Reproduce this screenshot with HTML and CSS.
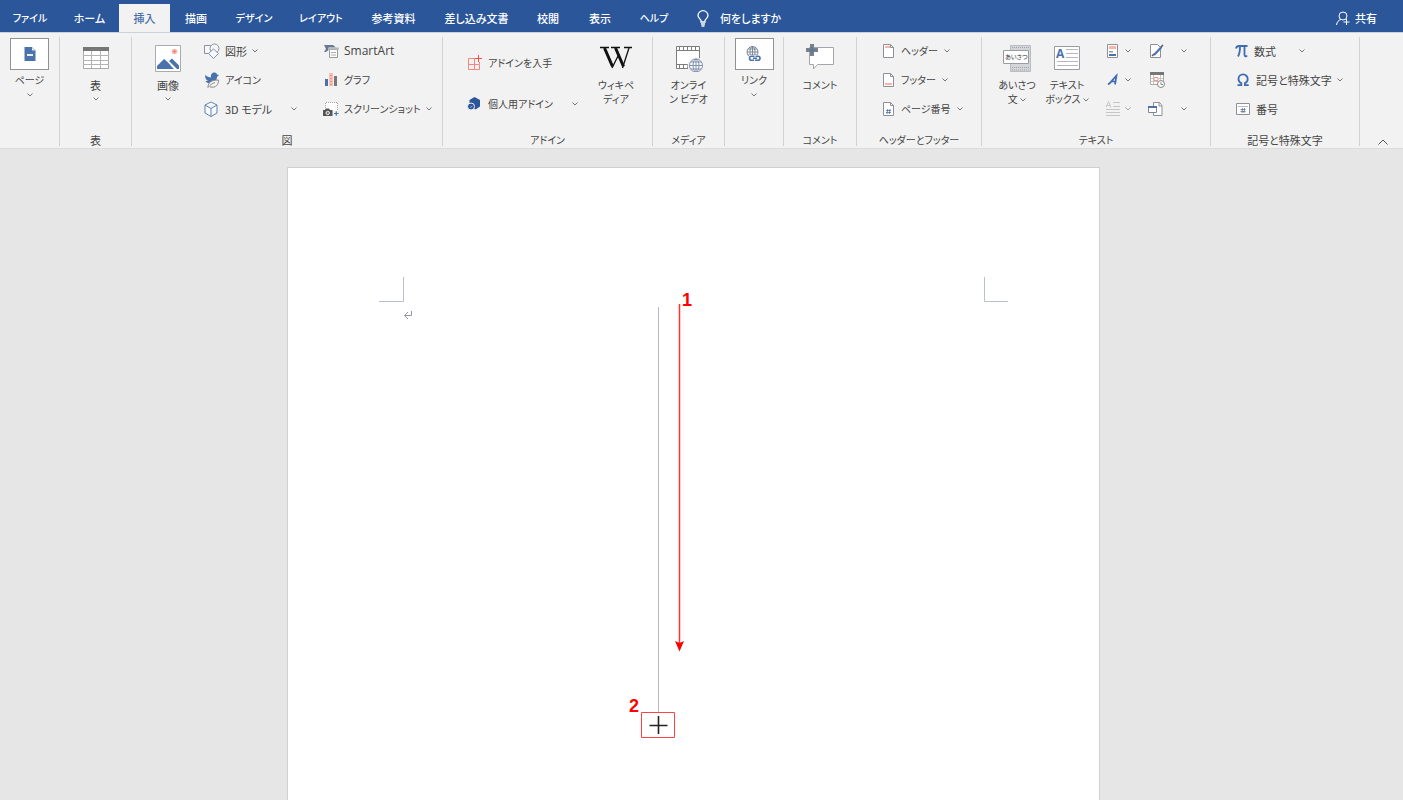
FILE: index.html
```html
<!DOCTYPE html>
<html lang="ja">
<head>
<meta charset="utf-8">
<title>文書</title>
<link rel="stylesheet" href="styles.css">
</head>
<body>
<svg class="defs" aria-hidden="true">
  <symbol id="caret" viewBox="0 0 6 6"><path d="M.5 1.500l2.500 2.500 2.500-2.500" fill="none" stroke="#777" stroke-width="1"/></symbol>
</svg>
<header class="titlebar">
  <nav class="tabs">
    <button class="tab kana">ファイル</button>
    <button class="tab">ホーム</button>
    <button class="tab active">挿入</button>
    <button class="tab">描画</button>
    <button class="tab kana">デザイン</button>
    <button class="tab kana">レイアウト</button>
    <button class="tab">参考資料</button>
    <button class="tab">差し込み文書</button>
    <button class="tab">校閲</button>
    <button class="tab">表示</button>
    <button class="tab kana">ヘルプ</button>
  </nav>
  <button class="tell">
    <svg width="12" height="17" viewBox="0 0 12 17" fill="none" stroke="#fff" stroke-width="1.3"><path d="M4 12V10.500C3.500 9 1 8 1 5.500a5 4.800 0 0 1 10 0C11 8 8.500 9 8 10.500V12zM4 14h4M4.500 16h3"/></svg>
    何をしますか
  </button>
  <button class="share">
    <svg width="14" height="15" viewBox="0 0 14 15" fill="none" stroke="#fff" stroke-width="1"><circle cx="7" cy="5" r="4"/><path d="M.5 14C1 11 2.500 9 5 8.500M10.500 8v6M7.500 11h6"/></svg>
    共有
  </button>
</header>

<div class="ribbon">
  <section class="group">
    <div class="body centered">
      <button class="boxed">
        <span class="frame"><svg width="12" height="16" viewBox="0 0 12 16"><path d="M.5 1H8l3.500 3.500V15H.5z" fill="#4a72ad"/><path d="M8 1v3.500h3.500" fill="#dce5f2"/><path d="M3 8h6v2H3z" fill="#e8eef7"/></svg></span>
        <span class="kana">ページ</span>
        <svg class="caret"><use href="#caret"/></svg>
      </button>
    </div>
  </section>

  <section class="group">
    <div class="body centered">
      <button class="big">
        <svg width="28" height="28" viewBox="0 0 28 28"><path d="M1.500 3.500h25v21h-25z" fill="#fff" stroke="#aaa"/><path d="M1 3h26v4H1z" fill="#777"/><path d="M1 11.500h26M1 16.500h26M1 20.500h26M9.500 7v17M18.500 7v17" stroke="#b4b4b4" fill="none"/></svg>
        <span>表</span>
        <svg class="caret"><use href="#caret"/></svg>
      </button>
    </div>
    <h2>表</h2>
  </section>

  <section class="group">
    <div class="body figures">
      <button class="big">
        <svg width="28" height="28" viewBox="0 0 28 28"><path d="M1.500 1.500h25v26h-25z" fill="#fff" stroke="#a9abb0"/><path d="M3 25v-3l7-7 3 2.500 3 3 1 1.500 3 3zM15 17l3-2.500 7 7V25h-2z" fill="#4a72ad"/><circle cx="20.500" cy="7.500" r="2.800" fill="#f7b6ae"/><circle cx="20.500" cy="7.500" r="1" fill="#e8645a"/></svg>
        <span>画像</span>
        <svg class="caret"><use href="#caret"/></svg>
      </button>
      <div class="stack">
        <button class="item"><svg width="16" height="16" viewBox="0 0 16 16" fill="#f8f8f8" stroke="#8b929d"><path d="M.5 2.500h9v8h-9z"/><circle cx="10.500" cy="5.500" r="4.500"/><path d="M9.500 6l5 4.500-5 5-5-5z" stroke="#7d93b5"/></svg><span>図形</span><svg class="caret"><use href="#caret"/></svg></button>
        <button class="item"><svg width="16" height="16" viewBox="0 0 16 16"><path d="M1 3c2 1.500 4 2.500 6 2.500C6.500 2.500 8 .5 10.500.5c1.500 0 2.500 1 2.500 2l2 .5-2 2c0 3-2.500 6-6 6.500C4 11.500 2 10.500 1.500 9H4C2 8 1 6 1 3z" fill="#4a72ad"/><path d="M4 15.500c0-5 3-7.500 10.500-7.500 0 5-2.500 8-8.500 7M4 15.500c2-2.500 4-4 7-5" fill="#f4f4f4" stroke="#8a8a8a"/></svg><span class="kana">アイコン</span></button>
        <button class="item"><svg width="16" height="16" viewBox="0 0 16 16" fill="#f8fafd" stroke="#5f82b5"><path d="M7 1l6 3v8l-6 3.500L1 12V4zM1 4l6 3.500L13 4M7 7.500v8"/></svg><span>3D モデル</span><svg class="caret far"><use href="#caret"/></svg></button>
      </div>
      <div class="stack">
        <button class="item"><svg width="16" height="16" viewBox="0 0 16 16"><path d="M1 2h9l3 2.500H5.500V7L3 9H1l2-3z" fill="#677892"/><path d="M6.500 6.500h8v8h-8z" fill="#fff" stroke="#999"/><path d="M6 4.500h10v2H6z" fill="#bbb"/><path d="M8 9.500h5M8 12h5" stroke="#aaa"/></svg><span class="latin">SmartArt</span></button>
        <button class="item"><svg width="16" height="16" viewBox="0 0 16 16"><path d="M2 7h3v7H2z" fill="#4a72ad"/><path d="M6 1h4v13H6z" fill="#f9beb6"/><path d="M8 3v10" stroke="#e9635a" stroke-dasharray="1 2"/><path d="M11 4h3v10h-3z" fill="#777"/></svg><span class="kana">グラフ</span></button>
        <button class="item"><svg width="16" height="16" viewBox="0 0 16 16"><path d="M2.500 9V1.500h12V10" fill="#fff" stroke="#a5a5a5" stroke-dasharray="1 1"/><path d="M0 9h2l1-1.500h3L7 9h2.500v6H0z" fill="#555"/><circle cx="4.700" cy="12" r="1.700" fill="#777" stroke="#eee"/><path d="M11 12.500h4.500M13.250 10.250v4.500" stroke="#4a72ad" stroke-width="1.200"/></svg><span class="kana">スクリーンショット</span><svg class="caret"><use href="#caret"/></svg></button>
      </div>
    </div>
    <h2>図</h2>
  </section>

  <section class="group">
    <div class="body addins">
      <div class="stack two">
        <button class="item"><svg width="16" height="16" viewBox="0 0 16 16" fill="none" stroke="#f4887e"><path d="M1.500 3.500h6v11h-6zM1.500 9.500h11v5h-5v-6M8 3.500H6M12.500 9V7"/><path d="M11.500 0v7M8 3.500h7" stroke="#ee5148"/></svg><span class="kana">アドインを入手</span></button>
        <button class="item"><svg width="16" height="16" viewBox="0 0 16 16" fill="#2b579a"><path d="M7.500 1l5.500 3v6.500L8.500 13.500 2.500 10V4z"/><circle cx="4" cy="10.500" r="3.500" stroke="#f2f2f2"/><path d="M3 11.500l2.500-1.500" stroke="#9db4d6"/></svg><span class="kana">個人用アドイン</span><svg class="caret far"><use href="#caret"/></svg></button>
      </div>
      <button class="big">
        <svg width="32" height="28" viewBox="0 0 32 28" fill="none" stroke="#111"><path d="M0 3.500h9M11 3.500h9M24 3.500h8" stroke-width="1.400"/><path d="M4.500 4l8 18.500M15.500 4l8 18.500" stroke-width="3"/><path d="M12 24L18 12M22.500 24L29 4" stroke-width="1.300"/></svg>
        <span class="kana">ウィキペ<br>ディア</span>
      </button>
    </div>
    <h2 class="kana">アドイン</h2>
  </section>

  <section class="group">
    <div class="body centered">
      <button class="big">
        <svg width="28" height="28" viewBox="0 0 28 28" fill="none" stroke="#7d7d7d"><path d="M1.500 2.500h23v22h-23z" fill="#fff"/><path d="M1 6.500h24M1 20.500h14M4.500 3v3M8.500 3v3M12.500 3v3M16.500 3v3M20.500 3v3M4.500 21v3M8.500 21v3M12.500 21v3"/><circle cx="21" cy="22" r="8.500" fill="#f2f2f2" stroke="none"/><g stroke="#7f90ad"><circle cx="21" cy="21.500" r="6.500" fill="#fff"/><ellipse cx="21" cy="21.500" rx="3" ry="6.500"/><path d="M21 15v13M14.500 21.500h13M16 18h10M16 25h10"/></g></svg>
        <span class="kana">オンライ<br>ン ビデオ</span>
      </button>
    </div>
    <h2 class="kana">メディア</h2>
  </section>

  <section class="group">
    <div class="body centered">
      <button class="boxed">
        <span class="frame"><svg width="16" height="16" viewBox="0 0 16 16" fill="none"><g stroke="#7d8796"><circle cx="6.500" cy="6" r="5.500"/><ellipse cx="6.500" cy="6" rx="2.500" ry="5.500"/><path d="M1 6h11M2 3h9M2 9h9M6.500.5v11"/></g><path d="M3 9h12v6H3z" fill="#fff"/><path d="M8.500 10.200H5.500a2 2 0 0 0 0 4H8M9 14.200h3a2 2 0 0 0 0-4h-2.500M7 12.200h4" stroke="#4a72ad" stroke-width="1.600"/></svg></span>
        <span class="kana">リンク</span>
        <svg class="caret"><use href="#caret"/></svg>
      </button>
    </div>
  </section>

  <section class="group">
    <div class="body centered">
      <button class="big">
        <svg width="30" height="28" viewBox="0 0 30 28"><path d="M4.500 3.500h24v17h-16L8.500 25v-4.500h-4z" fill="#fff" stroke="#a3a6ab"/><path d="M5 0h4v4h4v4H9v4H5V8H1V4h4z" fill="#7b8189"/><path d="M7 3v6M4 6h6" stroke="#4a72ad"/></svg>
        <span class="kana">コメント</span>
      </button>
    </div>
    <h2 class="kana">コメント</h2>
  </section>

  <section class="group">
    <div class="body headfoot">
      <div class="stack">
        <button class="item"><svg width="12" height="16" viewBox="0 0 12 16"><path d="M.5 1.500h7l3 3v10H.5z" fill="#fff" stroke="#8d9097"/><path d="M7.500 1.500v3h3" fill="none" stroke="#8d9097"/><path d="M2 3h5v2H2z" fill="#f9b3a8"/></svg><span class="kana">ヘッダー</span><svg class="caret"><use href="#caret"/></svg></button>
        <button class="item"><svg width="12" height="16" viewBox="0 0 12 16"><path d="M.5 1.500h7l3 3v10H.5z" fill="#fff" stroke="#8d9097"/><path d="M7.500 1.500v3h3" fill="none" stroke="#8d9097"/><path d="M2 11h7v2H2z" fill="#f9b3a8"/></svg><span class="kana">フッター</span><svg class="caret"><use href="#caret"/></svg></button>
        <button class="item"><svg width="12" height="16" viewBox="0 0 12 16"><path d="M.5 1.500h7l3 3v10H.5z" fill="#fff" stroke="#8d9097"/><path d="M7.500 1.500v3h3" fill="none" stroke="#8d9097"/><path d="M4.700 8l-.7 5M7 8l-.7 5M3 9.500h5M3 11.500h5" stroke="#4a72ad" stroke-width=".8"/></svg><span class="kana">ページ番号</span><svg class="caret"><use href="#caret"/></svg></button>
      </div>
    </div>
    <h2 class="kana tight">ヘッダーとフッター</h2>
  </section>

  <section class="group">
    <div class="body texts">
      <button class="big">
        <svg width="28" height="28" viewBox="0 0 28 28"><path d="M7.500 1.500h20v26h-20z" fill="#d3d5d9" stroke="#b9bcc1"/><path d="M9 3.500h18M9 23.500h18M9 26h18" stroke="#9da1a8" stroke-dasharray="1 1"/><path d="M.5 6.500h25v13H.5z" fill="#fff" stroke="#9a9ca1"/><text x="2" y="15" class="greet">あいさつ</text></svg>
        <span class="kana">あいさつ<br>文 <svg class="caret"><use href="#caret"/></svg></span>
      </button>
      <button class="big">
        <svg width="28" height="28" viewBox="0 0 28 28"><path d="M1.500 2.500h25v23h-25z" fill="#fff" stroke="#9a9ca1"/><text x="3" y="14" class="letter">A</text><path d="M13 5.500h12M13 9.500h12M13 13.500h12M4 17.500h21M4 21.500h21" stroke="#b4b6ba"/></svg>
        <span class="kana">テキスト<br>ボックス <svg class="caret"><use href="#caret"/></svg></span>
      </button>
      <div class="stack">
        <button class="item" aria-label="クイック パーツ"><svg width="14" height="16" viewBox="0 0 14 16"><path d="M1.500 1.500h10v13h-10z" fill="#fff" stroke="#8d9097"/><path d="M3 3h7v3H3z" fill="#f9b3a8"/><path d="M3 8h4v1.500H3z" fill="#999"/><path d="M3 11h7v2H3z" fill="#4a72ad"/></svg><svg class="caret"><use href="#caret"/></svg></button>
        <button class="item" aria-label="ワードアート"><svg width="14" height="16" viewBox="0 0 14 16" fill="none" stroke="#3f6cb0"><path d="M2 12.500C5 11 7 7 10.500 3.500L9 12.500M4.500 9.500h6" stroke-width="1.700"/></svg><svg class="caret"><use href="#caret"/></svg></button>
        <button class="item faded" aria-label="ドロップ キャップ"><svg width="14" height="16" viewBox="0 0 14 16" fill="none" stroke="#aaa"><path d="M0 6.500L2.500.5 5 6.500M1 4.500h3M7 1.500h7M7 5.500h7M0 8.500h14M0 11.500h14M0 14.500h14"/></svg><svg class="caret"><use href="#caret"/></svg></button>
      </div>
      <div class="stack">
        <button class="item" aria-label="署名欄"><svg width="16" height="16" viewBox="0 0 16 16"><path d="M2.500 1.500h7l3 3v10h-10z" fill="#fff" stroke="#8d9097"/><path d="M6 12l7.500-8" stroke="#4a72ad" stroke-width="2.200"/><path d="M13 4l2-2M4 13l2-2" stroke="#556" stroke-width="1.500"/></svg><svg class="caret far"><use href="#caret"/></svg></button>
        <button class="item" aria-label="日付と時刻"><svg width="17" height="16" viewBox="0 0 17 16"><path d="M2.500 1.500h13v11h-13z" fill="#fff" stroke="#aaa"/><path d="M2 0h14v3H2z" fill="#777"/><path d="M2 6.500h13M2 9.500h9M5.500 3v9M12.500 3v5" stroke="#c5c5c5"/><path d="M6 5.500h4v3H6z" fill="#fff" stroke="#f4978c"/><circle cx="13" cy="12" r="3.500" fill="#fff" stroke="#888"/><path d="M13 10v2.500h2" fill="none" stroke="#888"/></svg></button>
        <button class="item" aria-label="オブジェクト"><svg width="16" height="16" viewBox="0 0 16 16"><path d="M5.500 1.500h6l2.500 3v10H5.500z" fill="#fff" stroke="#8d9097"/><path d="M11 1.500v3.500h3" fill="none" stroke="#8d9097"/><path d="M.5 5.500h8v6h-8z" fill="#fff" stroke="#7d8796"/><path d="M0 5h9v2H0z" fill="#4a72ad"/></svg><svg class="caret far"><use href="#caret"/></svg></button>
      </div>
    </div>
    <h2 class="kana">テキスト</h2>
  </section>

  <section class="group">
    <div class="body symbols">
      <div class="stack">
        <button class="item"><svg width="14" height="16" viewBox="0 0 14 16" fill="none" stroke="#3f6cb0"><path d="M1 5.500C1.500 3.500 2 3 4 3h8.500M5 3.500C5 8 4.500 11 3 13.500M9.500 3.500v8c0 2 1.500 2.500 2.500 1" stroke-width="1.800"/></svg><span>数式</span><svg class="caret far"><use href="#caret"/></svg></button>
        <button class="item"><svg width="16" height="16" viewBox="0 0 16 16" fill="none" stroke="#3f6cb0"><path d="M2.500 13.200h3.800v-2C4.500 10.500 3.500 9 3.500 7a4.600 4.600 0 0 1 9.200 0c0 2-1 3.500-2.800 4.200v2h3.800" stroke-width="1.800"/></svg><span>記号と特殊文字</span><svg class="caret"><use href="#caret"/></svg></button>
        <button class="item"><svg width="16" height="16" viewBox="0 0 16 16"><path d="M1.500 2.500h13v11h-13z" fill="#fff" stroke="#8d9097"/><path d="M3 5.500h10" stroke="#bbb"/><path d="M7.500 7L7 12M9.500 7L9 12M5.500 8.500h5M5.500 10.500h5" stroke="#5f7290" stroke-width=".8"/></svg><span>番号</span></button>
      </div>
    </div>
    <h2>記号と特殊文字</h2>
  </section>

  <div class="ribbonend">
    <button class="collapse" aria-label="リボンを折りたたむ"><svg width="12" height="8" viewBox="0 0 12 8"><path d="M1.500 6.500L6 2l4.500 4.500" fill="none" stroke="#555"/></svg></button>
  </div>
</div>

<main class="canvas">
  <article class="page">
    <svg class="drawing" width="811" height="632" viewBox="0 0 811 632" fill="none">
      <path d="M91 133.500h24.500V109M720 133.500h-23.500V109" stroke="#b9c0d0"/>
      <path d="M123.500 143v4.500h-7M120 144l-3.500 3.500L120 151" stroke="#92969d"/>
      <path d="M370.500 139v405" stroke="#b4bac8"/>
      <path d="M391.500 136v340" stroke="#f33" stroke-width="1.500"/>
      <path d="M387 473l4.500 2 4.500-2-4.500 10.500z" fill="#f00"/>
      <path d="M353.500 544.500h33v25h-33z" stroke="#f44"/>
      <path d="M370.500 548v18M361.500 557.500h18" stroke="#222" stroke-width="1.600"/>
      <text x="394" y="138" class="step">1</text>
      <text x="341" y="544" class="step">2</text>
    </svg>
  </article>
</main>
</body>
</html>
```

FILE: styles.css
```css
* { box-sizing: border-box; }
body {
  margin: 0;
  height: 100vh;
  display: flex;
  flex-direction: column;
  overflow: hidden;
  background: #e6e6e6;
  color: #444;
  font-family: "Noto Sans CJK JP", sans-serif;
  font-size: 11px;
  line-height: 14px;
  font-feature-settings: "palt";
}
button {
  border: 0;
  padding: 0;
  background: none;
  color: inherit;
  font: inherit;
  font-feature-settings: inherit;
  white-space: nowrap;
}
svg { display: block; flex: none; }
.defs { position: absolute; width: 0; height: 0; }
.caret { width: 6px; height: 6px; }

.titlebar {
  display: flex;
  align-items: stretch;
  height: 32px;
  flex: none;
  background: #2b579a;
  color: #fff;
  font-weight: 500;
}
.tabs {
  display: grid;
  grid-template-columns: 60px 59px 51px 52px 64px 70px 75px 91px 52px 52px 56px;
}
.tab { padding-top: 4px; }
.tab.active {
  margin-top: 4px;
  padding-top: 0;
  background: #f2f2f2;
  color: #4a6ea8;
}
.tell, .share { display: flex; align-items: center; padding-top: 4px; }
.tell { gap: 11px; margin-left: 15px; }
.share { gap: 5px; margin-left: auto; margin-right: 26px; }

.ribbon {
  display: grid;
  grid-template-columns: 60px 72px 311px 210px 72px 59px 73px 125px 229px 149px 1fr;
  flex: none;
  height: 117px;
  padding: 4px 0 2px;
  border-top: 1px solid #cdd1de;
  border-bottom: 1px solid #dcdcdc;
  background: #f2f2f2;
}
.group {
  display: flex;
  flex-direction: column;
  border-right: 1px solid #d0d2d8;
}
.group h2 {
  margin: 0;
  font-size: 11px;
  font-weight: 400;
  line-height: 12px;
  text-align: center;
}
.kana, .group h2.kana { font-size: 10px; }
.body { flex: 1; display: grid; align-items: start; }
.centered { justify-content: center; }
.big, .boxed {
  display: flex;
  flex-direction: column;
  align-items: center;
}
.big { padding-top: 7px; }
.big > span { margin-top: 6px; text-align: center; }
.big > span .caret { display: inline-block; vertical-align: middle; }
.big > .caret { margin-top: 4px; }
.boxed { padding-top: 1px; gap: 3px; }
.boxed .frame {
  display: grid;
  place-items: center;
  width: 39px;
  height: 32px;
  border: 1px solid #919191;
  background: #fff;
}
.boxed .caret { margin-top: 2px; }

.stack { display: grid; grid-auto-rows: 28px; row-gap: 1px; }
.two { grid-auto-rows: 40px; padding-top: 6px; }
.item { display: flex; align-items: center; gap: 5px; }
.item .far { margin-left: auto; }
.latin { font-family: "Open Sans", sans-serif; font-size: 12px; }
.faded { opacity: .6; }

.figures { grid-template-columns: 72px 93px 1fr; }
.figures .stack + .stack { margin-left: 26px; }
.addins { grid-template-columns: 111px 72px; column-gap: 2px; padding-left: 24px; }
.headfoot { padding-left: 26px; }
.headfoot .item { gap: 6px; }
.texts { grid-template-columns: 50px 50px 26px 38px; padding-left: 10px; }
.texts .stack { margin-left: 14px; width: 26px; }
.texts .stack + .stack { margin-left: 30px; width: 39px; }
.symbols { grid-template-columns: 106px; padding-left: 24px; }
.symbols .item .far { margin-left: 18px; }

.ribbonend { display: flex; align-items: flex-end; justify-content: flex-end; padding-right: 14px; }
.greet { font-size: 6px; fill: #333; }
.letter { font: 700 12px "Open Sans", sans-serif; fill: #4a72ad; }

.canvas {
  flex: 1;
  display: flex;
  justify-content: center;
  padding: 18px 16px 0 0;
  min-height: 0;
}
.page {
  position: relative;
  width: 813px;
  border: 1px solid #d0d0d0;
  border-bottom: 0;
  background: #fff;
}
.drawing { position: absolute; left: 0; top: 0; }
.step { font: 700 18px "Liberation Sans", Arial, sans-serif; fill: #f00; }
```
